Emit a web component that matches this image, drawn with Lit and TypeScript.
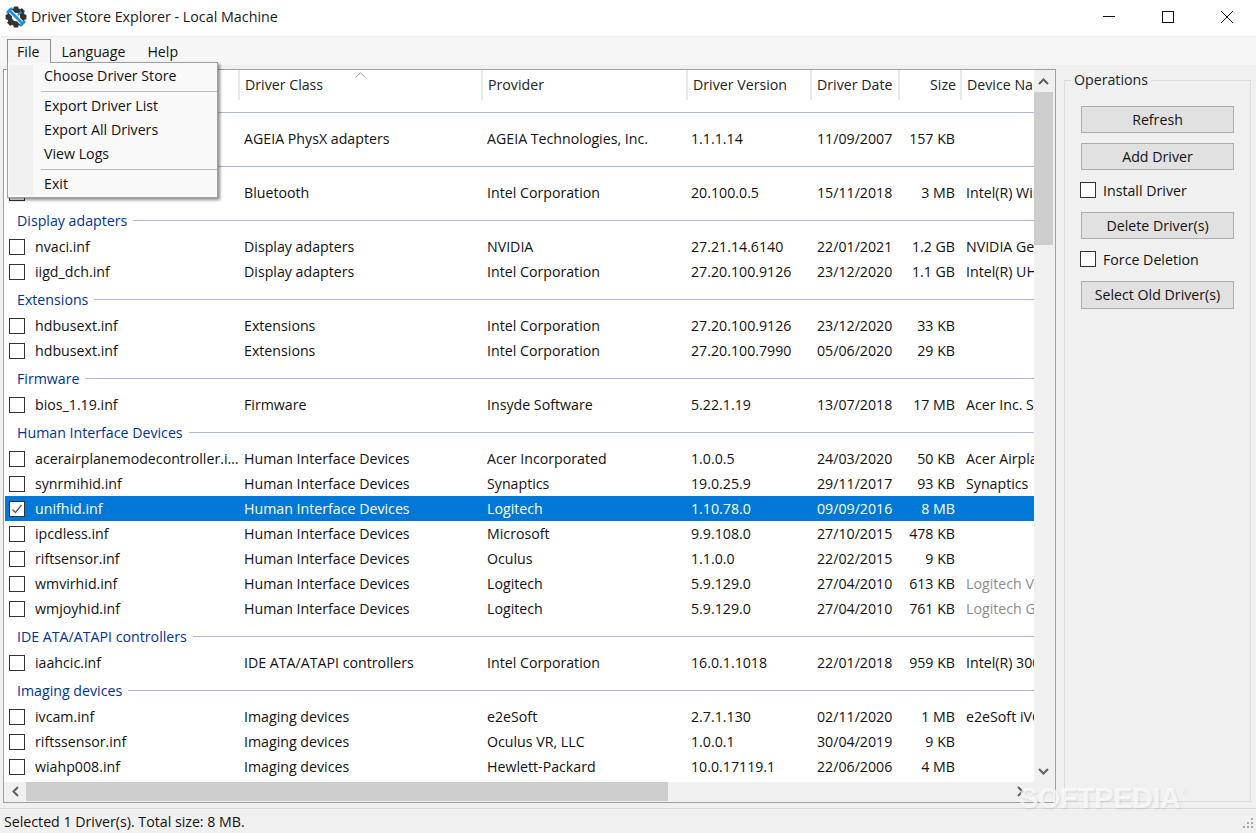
import { LitElement, html, css, svg } from "lit";
import { customElement } from "lit/decorators.js";

type Row = [string, string, string, string, string, string, string?, boolean?];
type Group = { name: string; rows: Row[] };

const hid = "Human Interface Devices";
const groups: Group[] = [
  { name: "", rows: [["", "AGEIA PhysX adapters", "AGEIA Technologies, Inc.", "1.1.1.14", "11/09/2007", "157 KB"]] },
  { name: "", rows: [["", "Bluetooth", "Intel Corporation", "20.100.0.5", "15/11/2018", "3 MB", "Intel(R) Wireless"]] },
  {
    name: "Display adapters",
    rows: [
      ["nvaci.inf", "Display adapters", "NVIDIA", "27.21.14.6140", "22/01/2021", "1.2 GB", "NVIDIA GeForce"],
      ["iigd_dch.inf", "Display adapters", "Intel Corporation", "27.20.100.9126", "23/12/2020", "1.1 GB", "Intel(R) UHD Graphics"],
    ],
  },
  {
    name: "Extensions",
    rows: [
      ["hdbusext.inf", "Extensions", "Intel Corporation", "27.20.100.9126", "23/12/2020", "33 KB"],
      ["hdbusext.inf", "Extensions", "Intel Corporation", "27.20.100.7990", "05/06/2020", "29 KB"],
    ],
  },
  { name: "Firmware", rows: [["bios_1.19.inf", "Firmware", "Insyde Software", "5.22.1.19", "13/07/2018", "17 MB", "Acer Inc. System"]] },
  {
    name: hid,
    rows: [
      ["acerairplanemodecontroller.inf", hid, "Acer Incorporated", "1.0.0.5", "24/03/2020", "50 KB", "Acer Airplane Mode"],
      ["synrmihid.inf", hid, "Synaptics", "19.0.25.9", "29/11/2017", "93 KB", "Synaptics"],
      ["unifhid.inf", hid, "Logitech", "1.10.78.0", "09/09/2016", "8 MB"],
      ["ipcdless.inf", hid, "Microsoft", "9.9.108.0", "27/10/2015", "478 KB"],
      ["riftsensor.inf", hid, "Oculus", "1.1.0.0", "22/02/2015", "9 KB"],
      ["wmvirhid.inf", hid, "Logitech", "5.9.129.0", "27/04/2010", "613 KB", "Logitech Virtual", true],
      ["wmjoyhid.inf", hid, "Logitech", "5.9.129.0", "27/04/2010", "761 KB", "Logitech Gamepad", true],
    ],
  },
  { name: "IDE ATA/ATAPI controllers", rows: [["iaahcic.inf", "IDE ATA/ATAPI controllers", "Intel Corporation", "16.0.1.1018", "22/01/2018", "959 KB", "Intel(R) 300 Series"]] },
  {
    name: "Imaging devices",
    rows: [
      ["ivcam.inf", "Imaging devices", "e2eSoft", "2.7.1.130", "02/11/2020", "1 MB", "e2eSoft iVCam"],
      ["riftssensor.inf", "Imaging devices", "Oculus VR, LLC", "1.0.0.1", "30/04/2019", "9 KB"],
      ["wiahp008.inf", "Imaging devices", "Hewlett-Packard", "10.0.17119.1", "22/06/2006", "4 MB"],
    ],
  },
];

const chevron = (d: string) => svg`<svg width="11" height="7" viewBox="0 0 11 7"><path d="${d}" fill="none" stroke="#606060" stroke-width="2"/></svg>`;
const chevronV = (d: string) => svg`<svg width="7" height="11" viewBox="0 0 7 11"><path d="${d}" fill="none" stroke="#606060" stroke-width="2"/></svg>`;

@customElement("app-root")
export class AppRoot extends LitElement {
  static styles = css`
    :host {
      display: flex;
      flex-direction: column;
      position: relative;
      width: 1256px;
      height: 833px;
      overflow: hidden;
      background: #f0f0f0;
      font-family: "Open Sans", "Noto Sans", sans-serif;
      font-size: 14.2px;
      color: #000;
      line-height: 18px;
    }
    .title { height: 36px; flex: none; box-sizing: border-box; padding-bottom: 2px; background: #fff; display: flex; align-items: center; }
    .app-icon { margin-left: 5px; width: 22px; height: 22px; flex: none; }
    .title-text { margin-left: 4px; font-size: 14.3px; color: #1a1a1a; }
    .win { margin-left: auto; display: flex; }
    .win button { all: unset; width: 59px; height: 34px; display: flex; align-items: center; justify-content: center; }
    .menubar { height: 29px; flex: none; background: #f6f6f6; border-top: 1px solid #efefef; display: flex; gap: 2px; padding-left: 7px; box-sizing: border-box; padding-top: 6px; }
    .menubar span { padding: 0 10px; color: #111; }
    .main { flex: 1; min-height: 0; display: flex; padding: 4px 5px 0 3px; gap: 8px; }
    .list { width: 1053px; height: 734px; box-sizing: border-box; flex: none; border: 1px solid #a0a0a0; border-right-width: 1px; display: flex; flex-direction: column; background: #f0f0f0; }
    .list-top { flex: 1; min-height: 0; display: flex; }
    .view { width: 1030px; flex: none; background: #fff; overflow: hidden; }
    .cols { display: grid; grid-template-columns: 234px 243px 205px 124px 88px 62px 74px; }
    .head { height: 30px; margin-bottom: -3px; position: relative; }
    .head > div { position: relative; white-space: nowrap; overflow: hidden; border-left: 2px solid #e9e9e9; padding-left: 5px; display: flex; align-items: center; color: #222; }
    .head > div:first-child { border-left: 0; }
    .head > .r { justify-content: flex-end; padding: 0 4px 0 0; }
    .caret { position: absolute; left: 351px; top: 2px; }
    .group { height: 29px; box-sizing: border-box; padding-top: 1px; display: flex; align-items: center; padding-left: 13px; gap: 6px; color: #003399; white-space: nowrap; position: relative; }
    .group span { padding-top: 2px; }
    .group i { flex: 1; height: 1px; background: #a9bbdf; }
    .row { height: 25px; align-items: center; white-space: nowrap; margin-left: 1px; color: #111; }
    .row > div { overflow: hidden; padding-left: 5px; min-width: 0; }
    .row > .name { display: flex; align-items: center; padding-left: 4px; gap: 10px; overflow: hidden; }
    .name span { overflow: hidden; text-overflow: ellipsis; min-width: 0; flex: 1; }
    .row > .r { text-align: right; padding: 0 6px 0 0; }
    .row > .date { padding-left: 6px; }
    .row > .ver { padding-left: 4px; }
    .row.sel { background: #0078d7; color: #fff; }
    .row .dim { color: #8d8d8d; }
    .box { width: 16px; height: 16px; box-sizing: border-box; border: 1px solid #333; background: #fff; flex: none; display: block; }
    .vbar { flex: 1; display: flex; flex-direction: column; }
    .vbtn { height: 22px; display: flex; align-items: center; justify-content: center; padding-right: 2px; flex: none; }
    .vthumb { height: 153px; width: 19px; background: #cdcdcd; flex: none; }
    .vspace { flex: 1; }
    .hbar { height: 20px; flex: none; display: flex; }
    .hbtn { width: 22px; display: flex; align-items: center; justify-content: center; flex: none; padding-bottom: 1px; box-sizing: border-box; }
    .hthumb { width: 642px; height: 19px; background: #cdcdcd; flex: none; }
    .hspace { flex: 1; display: flex; justify-content: flex-end; }
    .hspace .hbtn { margin-right: 24px; }
    fieldset { margin: 2px 0 0 0; padding: 20px 16px 0 16px; box-sizing: border-box; width: 187px; height: 731px; border: 1px solid #dcdcdc; display: flex; flex-direction: column; align-items: flex-start; min-width: 0; }
    legend { padding: 0 3px; margin-left: -10px; color: #222; }
    .ops { display: flex; flex-direction: column; align-items: flex-start; margin-top: -3px; }
    .btn { all: unset; box-sizing: border-box; width: 153px; height: 27px; background: #e1e1e1; border: 1px solid #adadad; text-align: center; font: inherit; color: #111; display: flex; align-items: center; justify-content: center; }
    .ops .btn + .btn { margin-top: 10px; }
    .chk { display: flex; align-items: center; gap: 7px; margin: 12px 0 14px -1px; height: 16px; color: #111; }
    .chk span { padding-top: 2px; }
    .btn.tall { height: 28px; }
    .status { height: 25px; flex: none; box-sizing: border-box; margin-top: 4px; border-top: 1px solid #d9d9d9; padding: 2px 0 0 4px; display: flex; align-items: center; position: relative; color: #111; }
    .grip { position: absolute; right: 2px; bottom: 3px; }
    .menu-tab { position: absolute; left: 7px; top: 39px; width: 44px; height: 24px; box-sizing: border-box; border: 1px solid #8f8f8f; border-bottom: 0; background: #f6f6f6; padding: 3px 0 0 9px; z-index: 3; color: #111; }
    .menu { position: absolute; left: 7px; top: 62px; width: 211px; height: 136px; box-sizing: border-box; border: 1px solid #a0a0a0; background: #f9f9f9; box-shadow: 2px 2px 3px rgba(0, 0, 0, 0.45); z-index: 2; display: flex; flex-direction: column; padding: 1px 1px 0 1px; }
    .menu::before { content: ""; position: absolute; left: 1px; top: 2px; bottom: 2px; width: 24px; background: #f1f1f1; }
    .menu div { position: relative; flex: none; height: 24px; padding-left: 35px; display: flex; align-items: center; color: #111; }
    .menu hr { position: relative; flex: none; margin: 3px 0 2px 32px; height: 1px; width: 176px; border: 0; background: #bdbdbd; }
    .wm { position: absolute; left: 1019px; top: 781px; font-family: "Liberation Sans", sans-serif; font-weight: 700; font-size: 29px; line-height: 34px; letter-spacing: -0.5px; color: rgba(255, 255, 255, 0.72); text-shadow: 1px 1px 2px rgba(0, 0, 0, 0.1); z-index: 4; white-space: nowrap; }
    .wm sup { font-size: 9px; font-weight: 400; vertical-align: 14px; line-height: 0; }
  `;

  private appIcon() {
    return svg`<svg class="app-icon" viewBox="0 0 22 22">
      <g fill="#333">
        <rect x="8.6" y="0.6" width="4.8" height="20.8" rx="0.5"/>
        <rect x="8.6" y="0.6" width="4.8" height="20.8" rx="0.5" transform="rotate(45 11 11)"/>
        <rect x="8.6" y="0.6" width="4.8" height="20.8" rx="0.5" transform="rotate(90 11 11)"/>
        <rect x="8.6" y="0.6" width="4.8" height="20.8" rx="0.5" transform="rotate(135 11 11)"/>
      </g>
      <circle cx="11" cy="11" r="7" fill="none" stroke="#333" stroke-width="4"/>
      <circle cx="11" cy="11" r="4.2" fill="#fff"/>
      <path d="M4.6 4.6 L17.4 17.4" stroke="#fff" stroke-width="4.6"/>
      <path d="M5 5 L17 17" stroke="#1b8fe0" stroke-width="2.8" stroke-linecap="round"/>
      <path d="M2.6 6.4 L6.4 2.6 M15.6 19.4 L19.4 15.6" stroke="#1b8fe0" stroke-width="2.6" stroke-linecap="round"/>
      <path d="M16.2 5.8 L13 9" stroke="#1b8fe0" stroke-width="2.2"/>
    </svg>`;
  }

  private box(checked: boolean) {
    return html`<svg class="box" viewBox="0 0 14 14">${checked ? svg`<path d="M2.5 7.5 L5.5 10.5 L11.5 3" fill="none" stroke="#555" stroke-width="1.3"/>` : ""}</svg>`;
  }

  private renderRow(r: Row) {
    const sel = r[0] === "unifhid.inf";
    return html`<div class="cols row ${sel ? "sel" : ""}">
      <div class="name">${this.box(sel)}<span>${r[0]}</span></div>
      <div>${r[1]}</div>
      <div>${r[2]}</div>
      <div class="ver">${r[3]}</div>
      <div class="date">${r[4]}</div>
      <div class="r">${r[5]}</div>
      <div class="${r[7] ? "dim" : ""}">${r[6] ?? ""}</div>
    </div>`;
  }

  render() {
    return html`
      <div class="title">
        ${this.appIcon()}
        <span class="title-text">Driver Store Explorer - Local Machine</span>
        <div class="win">
          <button><svg width="12" height="12" viewBox="0 0 12 12"><path d="M0 5.5H12" stroke="#111" /></svg></button>
          <button><svg width="12" height="12" viewBox="0 0 12 12"><rect x="0.5" y="0.5" width="11" height="11" fill="none" stroke="#111" /></svg></button>
          <button><svg width="12" height="12" viewBox="0 0 12 12"><path d="M0 0L12 12M12 0L0 12" stroke="#111" /></svg></button>
        </div>
      </div>
      <div class="menubar"><span style="visibility:hidden">File</span><span>Language</span><span>Help</span></div>
      <div class="main">
        <div class="list">
          <div class="list-top">
            <div class="view">
              <div class="cols head">
                <div></div>
                <div>Driver Class</div>
                <div>Provider</div>
                <div>Driver Version</div>
                <div>Driver Date</div>
                <div class="r">Size</div>
                <div>Device Name</div>
                <svg class="caret" width="11" height="6" viewBox="0 0 11 6"><path d="M0.5 5.5L5.5 0.8L10.5 5.5" fill="none" stroke="#9a9a9a" /></svg>
              </div>
              ${groups.map(
                (g) => html`<div class="group">${g.name ? html`<span>${g.name}</span>` : ""}<i></i></div>${g.rows.map((r) => this.renderRow(r))}`
              )}
            </div>
            <div class="vbar">
              <div class="vbtn">${chevron("M1 6L5.5 1.5L10 6")}</div>
              <div class="vthumb"></div>
              <div class="vspace"></div>
              <div class="vbtn">${chevron("M1 1L5.5 5.5L10 1")}</div>
            </div>
          </div>
          <div class="hbar">
            <div class="hbtn">${chevronV("M6 1L1.5 5.5L6 10")}</div>
            <div class="hthumb"></div>
            <div class="hspace"><div class="hbtn">${chevronV("M1 1L5.5 5.5L1 10")}</div></div>
          </div>
        </div>
        <fieldset>
          <legend>Operations</legend>
          <div class="ops">
            <button class="btn">Refresh</button>
            <button class="btn">Add Driver</button>
            <label class="chk">${this.box(false)}<span>Install Driver</span></label>
            <button class="btn">Delete Driver(s)</button>
            <label class="chk">${this.box(false)}<span>Force Deletion</span></label>
            <button class="btn tall">Select Old Driver(s)</button>
          </div>
        </fieldset>
      </div>
      <div class="status">
        Selected 1 Driver(s). Total size: 8 MB.
        <svg class="grip" width="12" height="12" viewBox="0 0 12 12" fill="#a8a8a8"><rect x="9" y="0" width="2" height="2"/><rect x="5" y="4" width="2" height="2"/><rect x="9" y="4" width="2" height="2"/><rect x="1" y="8" width="2" height="2"/><rect x="5" y="8" width="2" height="2"/><rect x="9" y="8" width="2" height="2"/></svg>
      </div>
      <div class="menu-tab">File</div>
      <div class="menu">
        <div>Choose Driver Store</div>
        <hr />
        <div>Export Driver List</div>
        <div>Export All Drivers</div>
        <div>View Logs</div>
        <hr />
        <div>Exit</div>
      </div>
      <div class="wm">SOFTPEDIA<sup>®</sup></div>
    `;
  }
}
